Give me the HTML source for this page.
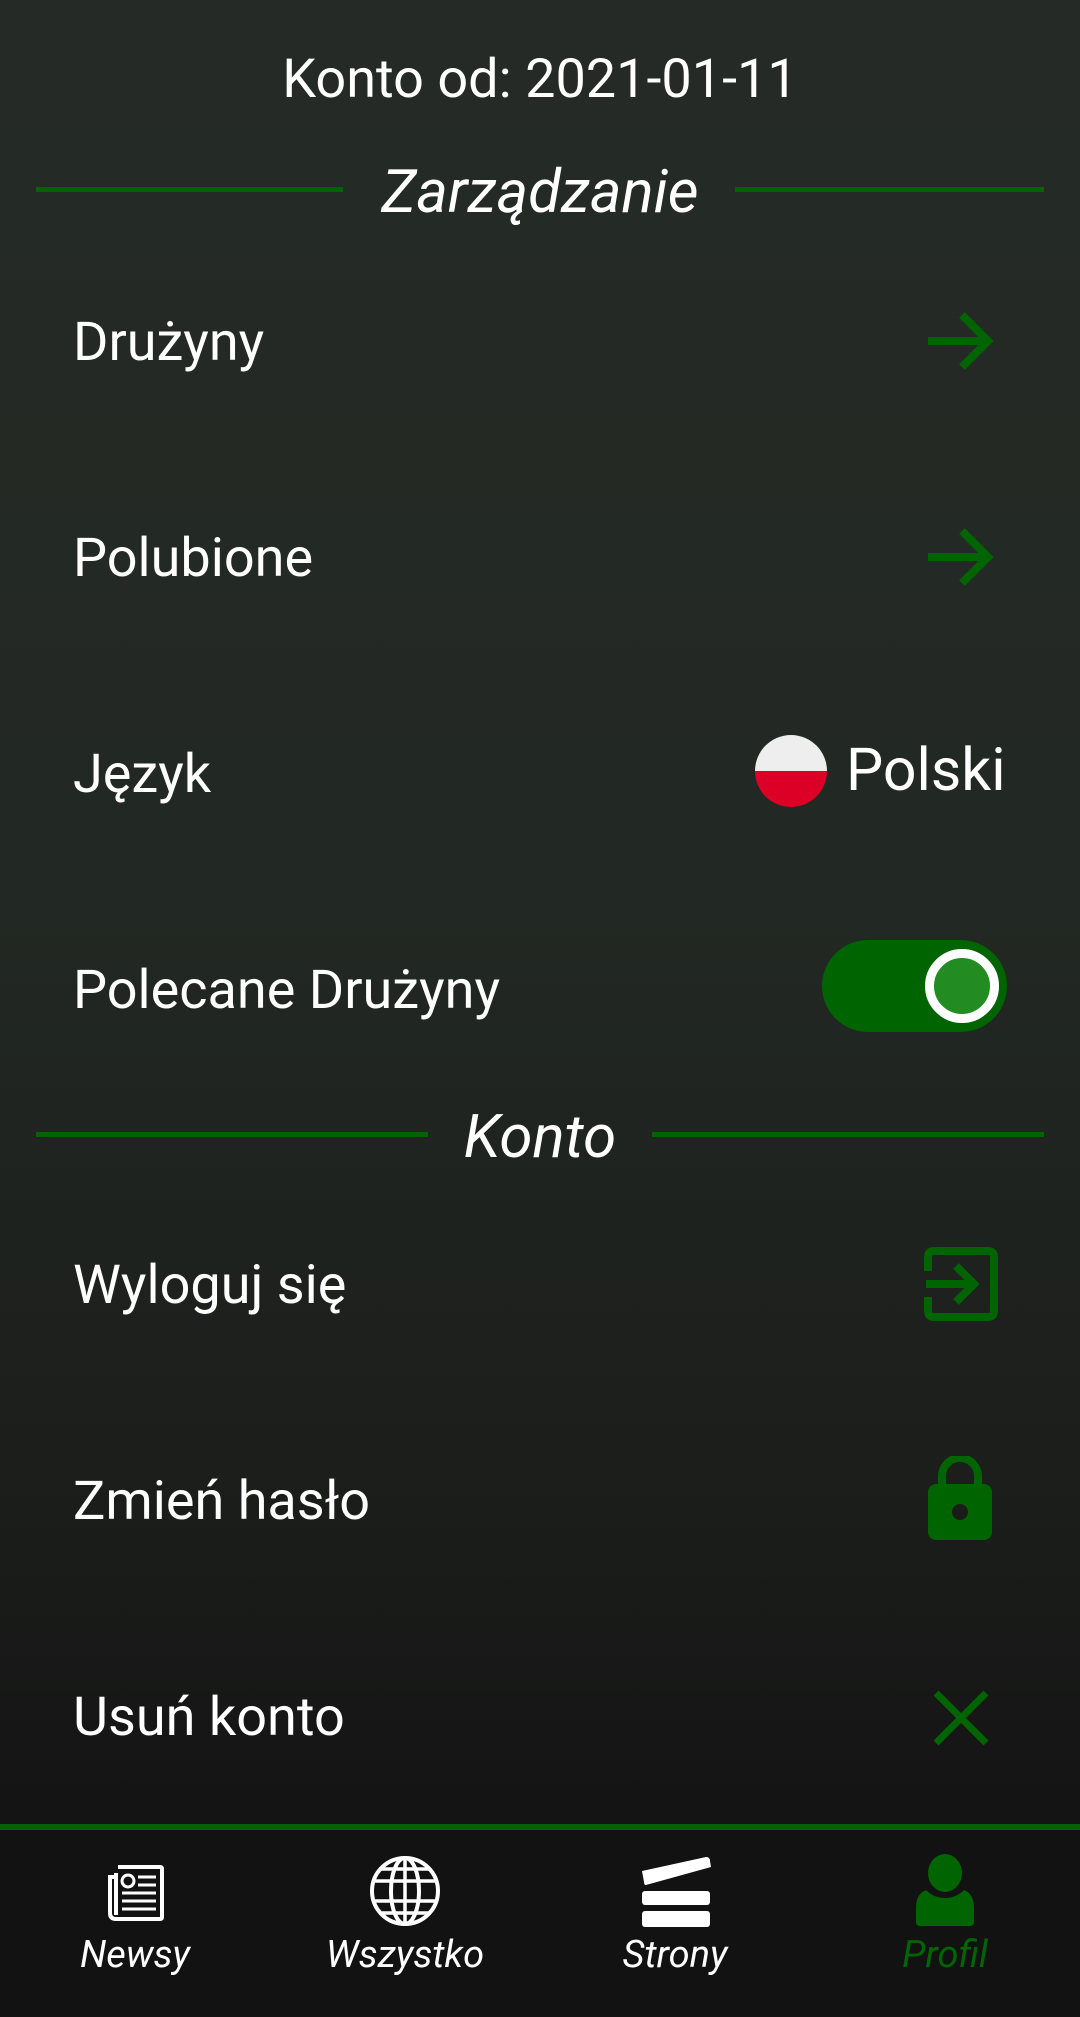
<!DOCTYPE html>
<html><head><meta charset="utf-8"><style>
*{margin:0;padding:0;box-sizing:border-box}
body{width:1080px;height:2017px;overflow:hidden;font-family:"Roboto","Liberation Sans",sans-serif;color:#fff;background:linear-gradient(#252a26 0%,#222823 45%,#1b1d1b 75%,#131313 91%);position:relative}
.a{position:absolute}
.t{position:absolute;left:73px;font-size:54px;line-height:60px;transform:translateY(-28px)}
.h{position:absolute;font-size:60px;font-style:italic;line-height:70px;transform:translateY(-34px);width:1080px;text-align:center}
.ln{position:absolute;height:5px;background:#006400}
.ic{position:absolute}
.nav{position:absolute;left:0;top:1824px;width:1080px;height:193px;background:#121212;border-top:6px solid #006400}
.lb{position:absolute;top:1931px;font-size:38px;font-style:italic;line-height:48px;width:270px;text-align:center}
</style></head><body>
<div class="a" style="top:50px;width:1080px;text-align:center;font-size:54px;line-height:60px">Konto od: 2021-01-11</div>

<div class="ln" style="left:36px;width:307px;top:187px"></div>
<div class="ln" style="left:735px;width:309px;top:187px"></div>
<div class="h" style="top:191px">Zarządzanie</div>

<div class="t" style="top:341px">Drużyny</div>
<svg class="ic" style="left:926px;top:309px" width="68" height="64" viewBox="0 0 68 64"><path d="M2 32H62M36 6L62 32L36 58" fill="none" stroke="#006400" stroke-width="8"/></svg>
<div class="t" style="top:557px">Polubione</div>
<svg class="ic" style="left:926px;top:525px" width="68" height="64" viewBox="0 0 68 64"><path d="M2 32H62M36 6L62 32L36 58" fill="none" stroke="#006400" stroke-width="8"/></svg>

<div class="t" style="top:773px">Język</div>
<svg class="ic" style="left:755px;top:735px" width="72" height="72" viewBox="0 0 72 72"><defs><clipPath id="c"><circle cx="36" cy="36" r="36"/></clipPath></defs><g clip-path="url(#c)"><rect width="72" height="36" fill="#eeeeee"/><rect y="36" width="72" height="36" fill="#dc0027"/></g></svg>
<div class="a" style="left:846px;top:738px;font-size:59px;line-height:66px">Polski</div>

<div class="t" style="top:989px">Polecane Drużyny</div>
<div class="a" style="left:822px;top:940px;width:185px;height:92px;border-radius:46px;background:#006400"></div>
<div class="a" style="left:925px;top:940px;width:74px;height:74px;margin-top:9px;border-radius:50%;background:#228b22;border:9px solid #fff"></div>

<div class="ln" style="left:36px;width:392px;top:1132px"></div>
<div class="ln" style="left:652px;width:392px;top:1132px"></div>
<div class="h" style="top:1136px">Konto</div>

<div class="t" style="top:1284px">Wyloguj się</div>
<svg class="ic" style="left:924px;top:1247px" width="74" height="74" viewBox="0 0 74 74"><path d="M4 24V10Q4 4 10 4H64Q70 4 70 10V64Q70 70 64 70H10Q4 70 4 64V50" fill="none" stroke="#006400" stroke-width="8"/><path d="M2 37H50M32 19L50 37L32 55" fill="none" stroke="#006400" stroke-width="8"/></svg>
<div class="t" style="top:1500px">Zmień hasło</div>
<svg class="ic" style="left:928px;top:1456px" width="64" height="84" viewBox="0 0 64 84"><path d="M14 30V20A18 18 0 0 1 50 20V30" fill="none" stroke="#006400" stroke-width="8"/><rect x="0" y="28" width="64" height="56" rx="8" fill="#006400"/><circle cx="32" cy="56" r="8" fill="#1a1c1a"/></svg>
<div class="t" style="top:1716px">Usuń konto</div>
<svg class="ic" style="left:933px;top:1690px" width="56" height="56" viewBox="0 0 56 56"><path d="M3 3L53 53M53 3L3 53" stroke="#006400" stroke-width="7"/></svg>

<div class="nav"></div>
<svg class="ic" style="left:106px;top:1863px" width="60" height="60" viewBox="0 0 60 60" fill="none" stroke="#fff" stroke-width="4"><path d="M12 4H54Q56 4 56 6V54Q56 56 54 56H10Q4 56 4 50V14H10"/><path d="M10 10V52"/><circle cx="22" cy="18" r="6" stroke-width="3"/><path d="M32 14H50M32 22H50M16 30H50M16 38H50M16 46H50" stroke-width="3"/></svg>
<svg class="ic" style="left:369px;top:1855px" width="72" height="72" viewBox="0 0 72 72" fill="none" stroke="#fff" stroke-width="4"><circle cx="36" cy="36" r="33"/><ellipse cx="36" cy="36" rx="14" ry="33"/><path d="M36 3V69M4 26H68M4 46H68M10 14H62M10 58H62" stroke-width="3.5"/></svg>
<svg class="ic" style="left:640px;top:1855px" width="72" height="72" viewBox="0 0 72 72" fill="#fff"><path d="M2 16L66 2Q70 2 70 6L71 12L6 30Q4 30 4 27Z"/><rect x="2" y="36" width="68" height="14" rx="3"/><rect x="2" y="56" width="68" height="16" rx="3"/></svg>
<svg class="ic" style="left:914px;top:1854px" width="62" height="72" viewBox="0 0 62 72" fill="#006400"><ellipse cx="31" cy="19" rx="17" ry="19"/><path d="M12 36Q20 44 31 44Q42 44 50 36Q60 40 60 54V68Q60 72 56 72H6Q2 72 2 68V54Q2 40 12 36Z"/></svg>
<div class="lb" style="left:0">Newsy</div>
<div class="lb" style="left:270px">Wszystko</div>
<div class="lb" style="left:540px">Strony</div>
<div class="lb" style="left:810px;color:#006400">Profil</div>
</body></html>
